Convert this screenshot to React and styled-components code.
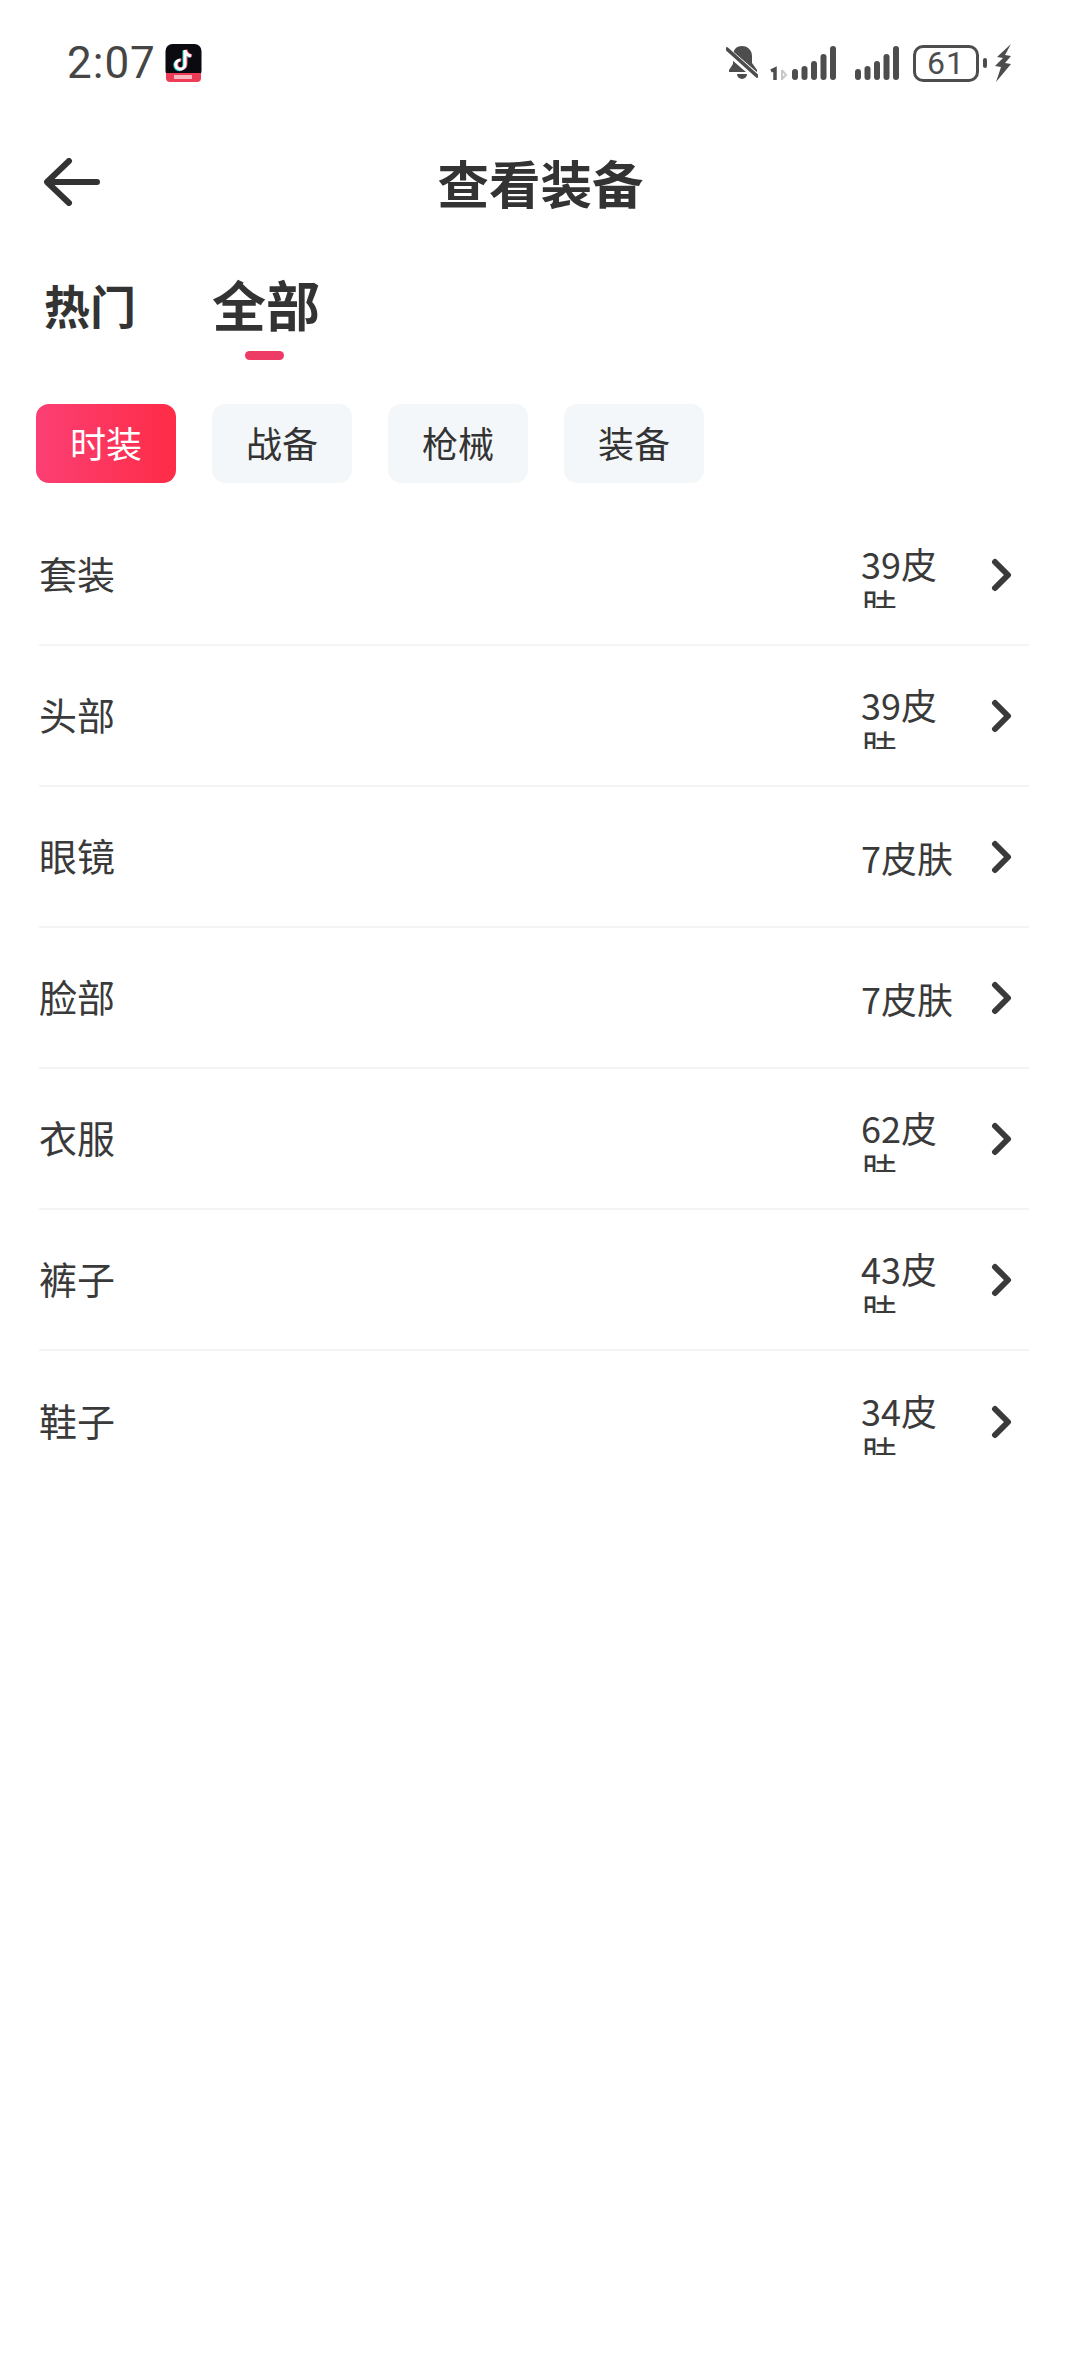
import React from 'react'
import styled, { createGlobalStyle } from 'styled-components'

const GlobalStyle = createGlobalStyle`
  html, body {
    margin: 0;
    padding: 0;
    background: #fff;
  }
  body {
    font-family: "Noto Sans CJK SC", "Noto Sans", sans-serif;
    color: #333;
  }
`

const Page = styled.div`
  width: 1080px;
  height: 2373px;
  overflow: hidden;
  background: #fff;
`
const StatusBar = styled.div`
  height: 124px;
  box-sizing: border-box;
  padding: 2px 68px 0 67px;
  display: flex;
  align-items: center;
  justify-content: space-between;
`
const StatusLeft = styled.div`
  display: flex;
  align-items: center;
  gap: 9px;
`
const Clock = styled.span`
  font-family: "Roboto", sans-serif;
  font-size: 44px;
  font-weight: 400;
  color: #454545;
  line-height: 1;
  letter-spacing: 1px;
`
const StatusRight = styled.div`
  display: flex;
  align-items: center;
`
const StatusGap = styled.span`
  width: ${p => p.$size}px;
`
const Battery = styled.div`
  width: 66px;
  height: 37px;
  box-sizing: border-box;
  border: 3px solid #4d4d4d;
  border-radius: 10px;
  margin-left: 14px;
  display: flex;
  align-items: center;
  justify-content: center;
  font-family: "Roboto", sans-serif;
  font-size: 32px;
  letter-spacing: 1px;
  color: #4d4d4d;
`
const BatteryNub = styled.div`
  width: 4px;
  height: 10px;
  margin: 0 7px 0 4px;
  border-radius: 2px;
  background: #4d4d4d;
`
const Header = styled.div`
  height: 116px;
  box-sizing: border-box;
  padding-left: 44px;
  display: flex;
  align-items: center;
  position: relative;
`
const Title = styled.h1`
  position: absolute;
  left: 1px;
  right: 0;
  margin: 0;
  text-align: center;
  font-size: 51.5px;
  font-weight: 700;
  line-height: 1.2;
  color: #333;
`
const Tabs = styled.div`
  height: 130px;
  padding-left: 44px;
  display: flex;
  align-items: flex-start;
  gap: 76px;
`
const Tab = styled.div`
  position: relative;
  height: 80px;
  display: flex;
  align-items: center;
  margin-top: 24px;
  font-weight: 700;
  line-height: 1;
  font-size: ${p => (p.$active ? '54px' : '46px')};
  color: #333;

  ${p => p.$active && `
    &::after {
      content: "";
      position: absolute;
      left: 50%;
      bottom: -16px;
      width: 39px;
      height: 9px;
      margin-left: -21px;
      border-radius: 5px;
      background: #ee3b66;
    }
  `}
`
const Chips = styled.div`
  margin-top: 34px;
  padding-left: 36px;
  display: flex;
  gap: 36px;
`
const Chip = styled.div`
  width: 140px;
  height: 79px;
  box-sizing: border-box;
  padding-bottom: 3px;
  border-radius: 13px;
  display: flex;
  align-items: center;
  justify-content: center;
  font-size: 36px;
  line-height: 1;
  color: ${p => (p.$active ? '#fff' : '#333')};
  background: ${p => (p.$active ? 'linear-gradient(90deg, #fb3f74, #fe2c46)' : '#f3f7f9')};
`
const List = styled.div`
  margin: 22px 51px 0 39px;
`
const Row = styled.div`
  height: 141px;
  box-sizing: border-box;
  display: flex;
  align-items: center;
  justify-content: space-between;
  border-bottom: ${p => (p.$last ? 'none' : '2px solid #f4f4f4')};
`
const RowLabel = styled.span`
  font-size: 38px;
  padding-bottom: 3px;
  color: #3a3a3a;
  line-height: 1;
`
const RowRight = styled.div`
  display: flex;
  align-items: center;
`
const RowValue = styled.div`
  width: 96px;
  max-height: 67px;
  box-sizing: border-box;
  padding-top: 1px;
  overflow: hidden;
  font-size: 36px;
  line-height: 42px;
  color: #3a3a3a;
`
const Chevron = styled.svg`
  width: 24px;
  height: 38px;
  margin: 0 14px 0 34px;
  display: block;
`

const chips = ['时装', '战备', '枪械', '装备']

const rows = [
  { label: '套装', value: '39皮肤' },
  { label: '头部', value: '39皮肤' },
  { label: '眼镜', value: '7皮肤' },
  { label: '脸部', value: '7皮肤' },
  { label: '衣服', value: '62皮肤' },
  { label: '裤子', value: '43皮肤' },
  { label: '鞋子', value: '34皮肤' }
]

const AppIcon = () => (
  <svg width="37" height="38" viewBox="0 0 37 38">
    <rect x="0.5" y="0" width="36" height="34" rx="7" fill="#0b0a10" />
    <path d="M1 29h35v5a4 4 0 0 1-4 4H5a4 4 0 0 1-4-4z" fill="#ee3b56" />
    <rect x="9" y="31" width="18" height="4" fill="#f7b7c0" />
    <path d="M20 6v14.5a4.6 4.6 0 1 1-4.6-4.6M20 6c.6 3.4 2.6 5.4 6 6" fill="none" stroke="#25e1e6" strokeWidth="3" transform="translate(-1 0.6)" />
    <path d="M20 6v14.5a4.6 4.6 0 1 1-4.6-4.6M20 6c.6 3.4 2.6 5.4 6 6" fill="none" stroke="#fe4a68" strokeWidth="3" transform="translate(1 -0.2)" />
    <path d="M20 6v14.5a4.6 4.6 0 1 1-4.6-4.6M20 6c.6 3.4 2.6 5.4 6 6" fill="none" stroke="#fff" strokeWidth="3" />
  </svg>
)

const BellOff = () => (
  <svg width="32" height="36" viewBox="0 0 32 36">
    <path d="M16 1c6 0 10 4.500 10 10v7l5 7v2H3v-2l4-6v-8c0-6 3-10 9-10z" fill="#4d4d4d" />
    <path d="M11 29h10a5 5 0 0 1-10 0z" fill="#4d4d4d" />
    <path d="M0 5l30 26" stroke="#fff" strokeWidth="7" />
    <path d="M1 4l30 27" stroke="#4d4d4d" strokeWidth="3.600" strokeLinecap="round" />
  </svg>
)

const Bars = ({ heights, start = 0 }) =>
  heights.map((h, i) => (
    <rect key={i} x={start + i * 9.5} y={35 - h} width="6" height={h} rx="3" fill="#4d4d4d" />
  ))

const SignalOne = () => (
  <svg width="66" height="36" viewBox="0 0 66 36">
    <path d="M1 26l4-2v11" fill="none" stroke="#4d4d4d" strokeWidth="3.500" />
    <path d="M12 25v10M12 25l4 5-4 4" fill="none" stroke="#c8c8c8" strokeWidth="2" />
    <Bars heights={[11, 14, 19, 26, 34]} start={22} />
  </svg>
)

const SignalTwo = () => (
  <svg width="44" height="36" viewBox="0 0 44 36">
    <Bars heights={[11, 14, 19, 26, 34]} />
  </svg>
)

const Bolt = () => (
  <svg width="18" height="38" viewBox="0 0 18 38">
    <path d="M17 0L3 13l6 1-8 8 6 1-5 15 15-18-6-1 6-7-6-1z" fill="#4d4d4d" />
  </svg>
)

const BackArrow = () => (
  <svg width="56" height="48" viewBox="0 0 56 48">
    <path d="M25 3L3 24l22 21M4 24h49" fill="none" stroke="#333" strokeWidth="6" strokeLinecap="round" strokeLinejoin="round" />
  </svg>
)

const App = () => (
  <Page>
    <GlobalStyle />
    <StatusBar>
      <StatusLeft>
        <Clock>2:07</Clock>
        <AppIcon />
      </StatusLeft>
      <StatusRight>
        <BellOff />
        <StatusGap $size={12} />
        <SignalOne />
        <StatusGap $size={19} />
        <SignalTwo />
        <Battery>61</Battery>
        <BatteryNub />
        <Bolt />
      </StatusRight>
    </StatusBar>
    <Header>
      <BackArrow />
      <Title>查看装备</Title>
    </Header>
    <Tabs>
      <Tab>热门</Tab>
      <Tab $active>全部</Tab>
    </Tabs>
    <Chips>
      {chips.map((chip, index) => (
        <Chip key={chip} $active={index === 0}>{chip}</Chip>
      ))}
    </Chips>
    <List>
      {rows.map((row, index) => (
        <Row key={row.label} $last={index === rows.length - 1}>
          <RowLabel>{row.label}</RowLabel>
          <RowRight>
            <RowValue>{row.value}</RowValue>
            <Chevron viewBox="0 0 24 38">
              <path d="M4 6l13 13L4 32" fill="none" stroke="#3a3a3a" strokeWidth="6" strokeLinecap="round" strokeLinejoin="round" />
            </Chevron>
          </RowRight>
        </Row>
      ))}
    </List>
  </Page>
)

export default App
